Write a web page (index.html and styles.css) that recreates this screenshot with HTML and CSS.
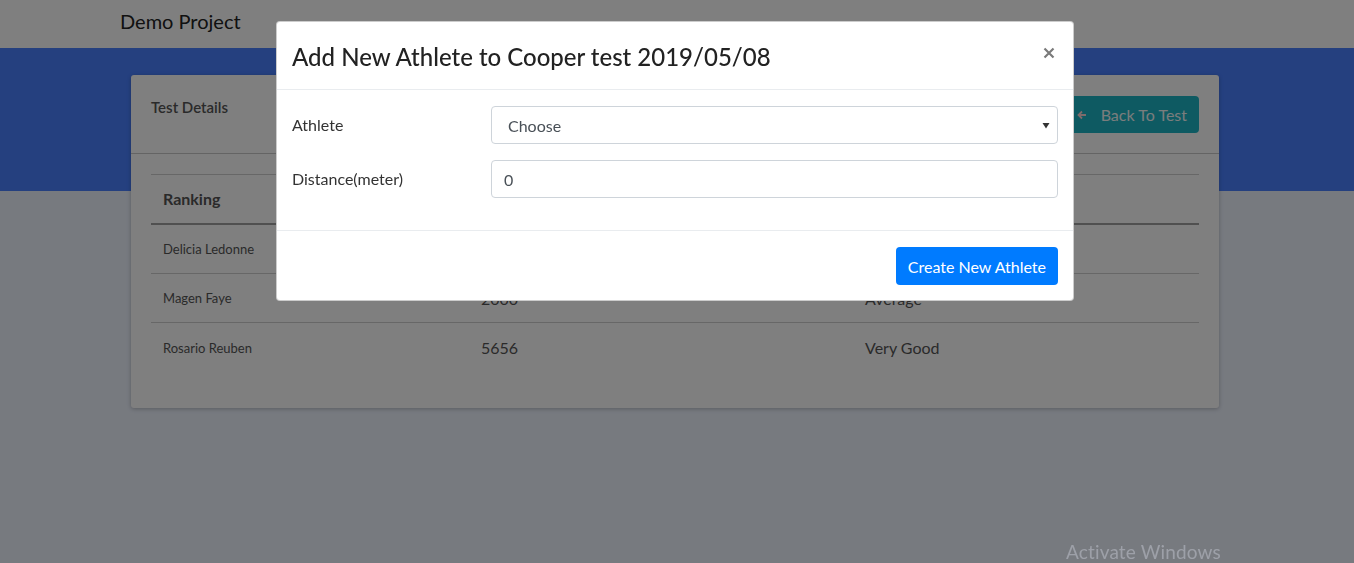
FILE: index.html
```html
<!DOCTYPE html>
<html lang="en">
<head>
<meta charset="utf-8">
<title>Demo Project</title>
<link rel="stylesheet" href="styles.css">
</head>
<body>
<header class="navbar"><span class="brand">Demo Project</span></header>
<div class="band"></div>
<main class="page">
  <section class="card">
    <div class="card-header">
      <span class="card-title">Test Details</span>
      <button class="btn-info" type="button">
        <svg class="arrow" width="10" height="10" viewBox="0 0 10 10"><path d="M5 1.5L1.5 5 5 8.5M1.5 5H9" fill="none" stroke="currentColor" stroke-width="1.8"/></svg>
        Back To Test
      </button>
    </div>
    <div class="card-body">
      <table class="table">
        <thead>
          <tr><th class="c1">Ranking</th><th class="c2">Distance</th><th class="c3">Result</th></tr>
        </thead>
        <tbody>
          <tr><td class="name">Delicia Ledonne</td><td>3000</td><td>Good</td></tr>
          <tr><td class="name">Magen Faye</td><td>2000</td><td>Average</td></tr>
          <tr><td class="name">Rosario Reuben</td><td>5656</td><td>Very Good</td></tr>
        </tbody>
      </table>
    </div>
  </section>
</main>

<div class="backdrop"></div>
<div class="modal-wrap">
  <div class="modal">
    <div class="modal-header">
      <h4 class="modal-title">Add New Athlete to Cooper test 2019/05/08</h4>
      <button class="close" type="button" aria-label="Close">
        <svg width="12" height="12" viewBox="0 0 12 12"><path d="M1.5 1.5l9 9M10.5 1.5l-9 9" stroke="#7a7a7a" stroke-width="2.2" fill="none"/></svg>
      </button>
    </div>
    <div class="modal-body">
      <div class="form-row">
        <label class="col-label">Athlete</label>
        <div class="col-input">
          <div class="select">
            <span>Choose</span>
            <svg width="8" height="7" viewBox="0 0 8 7"><path d="M0.5 1h7L4 6.5z" fill="#333"/></svg>
          </div>
        </div>
      </div>
      <div class="form-row">
        <label class="col-label">Distance(meter)</label>
        <div class="col-input">
          <input class="input" type="text" value="0">
        </div>
      </div>
    </div>
    <div class="modal-footer">
      <button class="btn-primary" type="button">Create New Athlete</button>
    </div>
  </div>
</div>
<div class="watermark">Activate Windows</div>
</body>
</html>
```
FILE: styles.css
```css
* { box-sizing: border-box; }
html, body { margin: 0; padding: 0; }
body {
  font-family: "Lato", "Noto Sans", sans-serif;
  font-size: 16px;
  line-height: 1.5;
  color: #212529;
  background: #eef4ff;
  height: 563px;
  overflow: hidden;
}
.navbar {
  height: 48px;
  background: #fff;
  padding-left: 120px;
  display: flex;
  align-items: center;
}
.brand { font-size: 20px; color: #222; position: relative; top: -3px; }
.band { height: 143px; background: #4a80ff; }
.page { margin-top: -116px; padding-left: 131px; }
.card {
  width: 1088px;
  background: #fff;
  border-radius: 3px;
  box-shadow: 0 1px 4px rgba(0,0,0,0.25);
}
.card-header {
  padding: 20px;
  display: flex;
  justify-content: space-between;
  align-items: flex-start;
  border-bottom: 1px solid #c8c8c8;
}
.card-title { font-size: 15px; line-height: 24px; font-weight: 600; color: #555; }
.btn-info {
  margin-top: 1px;
  height: 37px;
  padding: 0 12px 0 14px;
  display: flex;
  align-items: center;
  gap: 14px;
  font-family: inherit;
  font-size: 16px;
  color: #f4fafa;
  background: #1cb4c4;
  border: none;
  border-radius: 4px;
}
.arrow { color: #ffd6d6; }
.card-body { padding: 20px 20px 36px; }
.table { width: 100%; border-collapse: collapse; color: #555; }
.table th, .table td { text-align: left; padding: 2px 12px 0; height: 49px; border-top: 1px solid #cfcfcf; font-weight: normal; }
.table th { font-weight: 700; padding-top: 0; border-bottom: 2px solid #a0a0a0; }
.table tbody tr:first-child td { height: 50px; }
.c1 { width: 318px; }
.c2 { width: 384px; }
.table td.name { font-size: 13px; }

.backdrop { position: fixed; inset: 0; background: rgba(0,0,0,0.5); }
.modal-wrap { position: fixed; inset: 0; padding: 21px 0 0 276px; }
.modal {
  width: 798px;
  background: #fff;
  border: 1px solid rgba(0,0,0,0.2);
  border-radius: 4px;
  color: #212529;
}
.modal-header {
  display: flex;
  justify-content: space-between;
  align-items: flex-start;
  padding: 17px 15px 14px 15px;
  border-bottom: 1px solid #e9ecef;
}
.modal-title { margin: 0; font-size: 24px; line-height: 36px; font-weight: 500; color: #222; }
.close {
  background: none; border: none; padding: 0; margin: 8px 3px 0 0;
  display: flex;
}
.modal-body { padding: 16px 15px 16px; }
.form-row { display: flex; margin: 0 -15px 16px; }
.col-label { width: 199px; padding: 7px 15px; font-size: 16px; color: #333; line-height: 24px; }
.col-input { flex: 1; padding: 0 15px; }
.select, .input {
  width: 100%;
  height: 38px;
  border: 1px solid #ced4da;
  border-radius: 4px;
  font-family: inherit;
  font-size: 16px;
  color: #495057;
  background: #fff;
}
.select { display: flex; align-items: center; justify-content: space-between; padding: 1px 7px 0 16px; }
.input { padding: 0 12px; }
.modal-footer {
  border-top: 1px solid #e9ecef;
  padding: 16px 15px 15px;
  display: flex;
  justify-content: flex-end;
}
.btn-primary {
  height: 38px;
  padding: 0 12px;
  background: #007bff;
  color: #fff;
  border: none;
  border-radius: 4px;
  font-family: inherit;
  font-size: 16px;
}
.watermark {
  position: fixed;
  left: 1066px;
  top: 538px;
  font-size: 19px;
  letter-spacing: 0.15px;
  color: #9da0a8;
}
```
